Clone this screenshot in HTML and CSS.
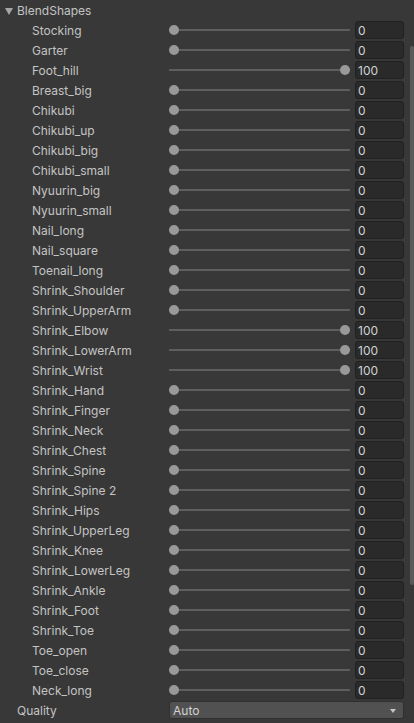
FILE: index.html
```html
<!DOCTYPE html>
<html>
<head>
<meta charset="utf-8">
<link rel="stylesheet" href="styles.css">
</head>
<body>
<div class="panel">
  <div class="content">
    <div class="foldout"><span class="caret"></span><span class="title">BlendShapes</span></div>
    <div class="row"><span class="label">Stocking</span><div class="slider" style="--v:0"><span class="thumb"></span></div><div class="field">0</div></div>
    <div class="row"><span class="label">Garter</span><div class="slider" style="--v:0"><span class="thumb"></span></div><div class="field">0</div></div>
    <div class="row"><span class="label">Foot_hill</span><div class="slider" style="--v:1"><span class="thumb"></span></div><div class="field">100</div></div>
    <div class="row"><span class="label">Breast_big</span><div class="slider" style="--v:0"><span class="thumb"></span></div><div class="field">0</div></div>
    <div class="row"><span class="label">Chikubi</span><div class="slider" style="--v:0"><span class="thumb"></span></div><div class="field">0</div></div>
    <div class="row"><span class="label">Chikubi_up</span><div class="slider" style="--v:0"><span class="thumb"></span></div><div class="field">0</div></div>
    <div class="row"><span class="label">Chikubi_big</span><div class="slider" style="--v:0"><span class="thumb"></span></div><div class="field">0</div></div>
    <div class="row"><span class="label">Chikubi_small</span><div class="slider" style="--v:0"><span class="thumb"></span></div><div class="field">0</div></div>
    <div class="row"><span class="label">Nyuurin_big</span><div class="slider" style="--v:0"><span class="thumb"></span></div><div class="field">0</div></div>
    <div class="row"><span class="label">Nyuurin_small</span><div class="slider" style="--v:0"><span class="thumb"></span></div><div class="field">0</div></div>
    <div class="row"><span class="label">Nail_long</span><div class="slider" style="--v:0"><span class="thumb"></span></div><div class="field">0</div></div>
    <div class="row"><span class="label">Nail_square</span><div class="slider" style="--v:0"><span class="thumb"></span></div><div class="field">0</div></div>
    <div class="row"><span class="label">Toenail_long</span><div class="slider" style="--v:0"><span class="thumb"></span></div><div class="field">0</div></div>
    <div class="row"><span class="label">Shrink_Shoulder</span><div class="slider" style="--v:0"><span class="thumb"></span></div><div class="field">0</div></div>
    <div class="row"><span class="label">Shrink_UpperArm</span><div class="slider" style="--v:0"><span class="thumb"></span></div><div class="field">0</div></div>
    <div class="row"><span class="label">Shrink_Elbow</span><div class="slider" style="--v:1"><span class="thumb"></span></div><div class="field">100</div></div>
    <div class="row"><span class="label">Shrink_LowerArm</span><div class="slider" style="--v:1"><span class="thumb"></span></div><div class="field">100</div></div>
    <div class="row"><span class="label">Shrink_Wrist</span><div class="slider" style="--v:1"><span class="thumb"></span></div><div class="field">100</div></div>
    <div class="row"><span class="label">Shrink_Hand</span><div class="slider" style="--v:0"><span class="thumb"></span></div><div class="field">0</div></div>
    <div class="row"><span class="label">Shrink_Finger</span><div class="slider" style="--v:0"><span class="thumb"></span></div><div class="field">0</div></div>
    <div class="row"><span class="label">Shrink_Neck</span><div class="slider" style="--v:0"><span class="thumb"></span></div><div class="field">0</div></div>
    <div class="row"><span class="label">Shrink_Chest</span><div class="slider" style="--v:0"><span class="thumb"></span></div><div class="field">0</div></div>
    <div class="row"><span class="label">Shrink_Spine</span><div class="slider" style="--v:0"><span class="thumb"></span></div><div class="field">0</div></div>
    <div class="row"><span class="label">Shrink_Spine 2</span><div class="slider" style="--v:0"><span class="thumb"></span></div><div class="field">0</div></div>
    <div class="row"><span class="label">Shrink_Hips</span><div class="slider" style="--v:0"><span class="thumb"></span></div><div class="field">0</div></div>
    <div class="row"><span class="label">Shrink_UpperLeg</span><div class="slider" style="--v:0"><span class="thumb"></span></div><div class="field">0</div></div>
    <div class="row"><span class="label">Shrink_Knee</span><div class="slider" style="--v:0"><span class="thumb"></span></div><div class="field">0</div></div>
    <div class="row"><span class="label">Shrink_LowerLeg</span><div class="slider" style="--v:0"><span class="thumb"></span></div><div class="field">0</div></div>
    <div class="row"><span class="label">Shrink_Ankle</span><div class="slider" style="--v:0"><span class="thumb"></span></div><div class="field">0</div></div>
    <div class="row"><span class="label">Shrink_Foot</span><div class="slider" style="--v:0"><span class="thumb"></span></div><div class="field">0</div></div>
    <div class="row"><span class="label">Shrink_Toe</span><div class="slider" style="--v:0"><span class="thumb"></span></div><div class="field">0</div></div>
    <div class="row"><span class="label">Toe_open</span><div class="slider" style="--v:0"><span class="thumb"></span></div><div class="field">0</div></div>
    <div class="row"><span class="label">Toe_close</span><div class="slider" style="--v:0"><span class="thumb"></span></div><div class="field">0</div></div>
    <div class="row"><span class="label">Neck_long</span><div class="slider" style="--v:0"><span class="thumb"></span></div><div class="field">0</div></div>
    <div class="row quality"><span class="label">Quality</span><div class="dropdown"><span>Auto</span><span class="arrow"></span></div></div>
  </div>
  <div class="scrollbar"><div class="scroll-thumb"></div></div>
</div>
</body>
</html>
```

FILE: styles.css
```css
html, body {
  margin: 0;
  padding: 0;
  background: #383838;
}
body {
  width: 414px;
  height: 723px;
  overflow: hidden;
  font-family: Inter, "Noto Sans", "DejaVu Sans", sans-serif;
  font-size: 12px;
  color: #c4c4c4;
}
.panel {
  display: flex;
  width: 414px;
  height: 723px;
}
.content {
  flex: 1;
  display: flex;
  flex-direction: column;
  padding-right: 4px;
}
.foldout {
  height: 20px;
  display: flex;
  align-items: center;
  padding-left: 5px;
  gap: 4px;
}
.caret {
  width: 0;
  height: 0;
  border-left: 4px solid transparent;
  border-right: 4px solid transparent;
  border-top: 7px solid #a6a6a6;
  margin-top: 2px;
}
.title {
  padding-top: 2px;
  line-height: 18px;
}
.row {
  height: 20px;
  display: flex;
  align-items: center;
}
.label {
  flex: 0 0 169px;
  box-sizing: border-box;
  padding-left: 32px;
  padding-top: 2px;
  line-height: 18px;
  white-space: nowrap;
}
.quality .label {
  padding-left: 17px;
}
.slider {
  flex: 0 0 181px;
  height: 10px;
  display: flex;
  align-items: center;
  background: linear-gradient(#5e5e5e, #5e5e5e) no-repeat center / 100% 2px;
}
.thumb {
  width: 10px;
  height: 10px;
  border-radius: 50%;
  background: #999999;
  margin-left: calc(var(--v) * (100% - 10px));
}
.field {
  flex: 0 0 49px;
  box-sizing: border-box;
  margin-left: 5px;
  height: 18px;
  border: 1px solid #212121;
  background: #2a2a2a;
  border-radius: 3px;
  padding: 1px 0 0 2px;
  line-height: 16px;
  color: #d2d2d2;
}
.dropdown {
  flex: 0 0 235px;
  box-sizing: border-box;
  height: 18px;
  border: 1px solid #303030;
  background: #515151;
  border-radius: 3px;
  display: flex;
  align-items: center;
  justify-content: space-between;
  padding: 1px 7px 0 3px;
  line-height: 16px;
  color: #d2d2d2;
}
.arrow {
  width: 0;
  height: 0;
  border-left: 3.5px solid transparent;
  border-right: 3.5px solid transparent;
  border-top: 4px solid #c4c4c4;
}
.scrollbar {
  width: 6px;
  display: flex;
  flex-direction: column;
  padding-top: 46px;
  box-sizing: border-box;
}
.scroll-thumb {
  width: 4px;
  margin-left: 2px;
  height: 539px;
  border-radius: 2px;
  background: #5a5a5a;
}
```
